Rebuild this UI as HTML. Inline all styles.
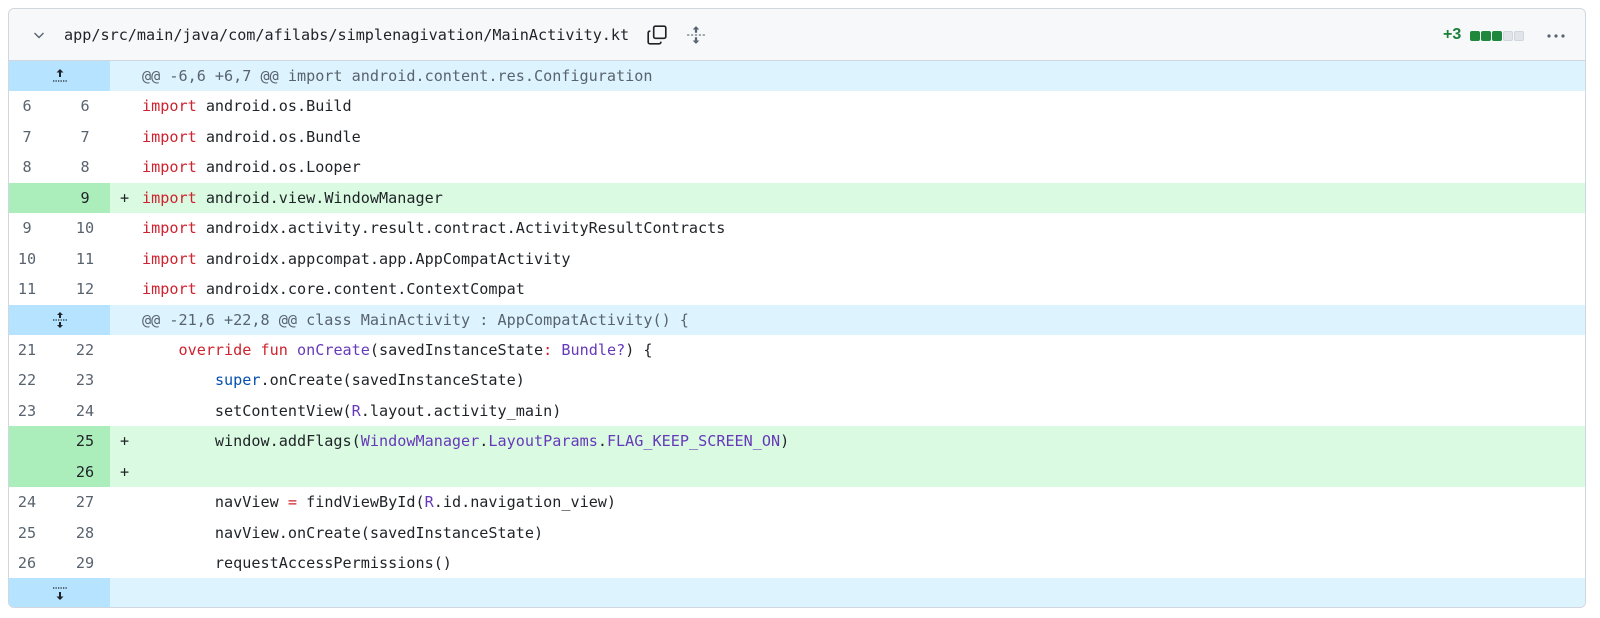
<!DOCTYPE html>
<html><head><style>
body{margin:0;background:#fff;width:1600px;height:618px;overflow:hidden}
.box{position:absolute;left:8px;top:8px;width:1576px;height:598px;border:1px solid #d0d7de;border-radius:6px;overflow:hidden;font-family:"DejaVu Sans Mono","Liberation Mono",monospace;font-size:15.15px;color:#1f2328}
.hdr{height:51px;background:#f6f8fa;border-bottom:1px solid #d0d7de;position:relative}
.row{height:30.45px;line-height:30.45px;position:relative;white-space:pre}
.n1,.n2{position:absolute;top:0;text-align:center;color:#59636e}
.n1{left:0;width:36px}.n2{left:52px;width:48px}
.code{position:absolute;left:133px;top:0}
.pl{position:absolute;left:111px;top:0}
.hk{background:#ddf4ff;color:#59636e}
.hk .g{position:absolute;left:0;top:0;width:101px;height:100%;background:#b6e3ff}
.ad{background:#dafbe1}
.ad .g{position:absolute;left:0;top:0;width:101px;height:100%;background:#aceebb}
.k{color:#cf222e}.b{color:#0550ae}.p{color:#6639ba}
</style></head><body>
<div class="box">
<div class="hdr">
<svg style="position:absolute;left:22px;top:18px" width="16" height="16" viewBox="0 0 16 16"><path d="M3.5 6l4.5 4.5L12.5 6" fill="none" stroke="#59636e" stroke-width="1.4"/></svg>
<div style="position:absolute;left:55px;top:17px">app/src/main/java/com/afilabs/simplenagivation/MainActivity.kt</div>
<svg style="position:absolute;left:637px;top:15px" width="22" height="22" viewBox="0 0 20 20" fill="none" stroke="#1f2328" stroke-width="1.5"><rect x="7" y="2" width="11" height="11" rx="1.5"/><path d="M4 6.5H3.5a1.5 1.5 0 0 0-1.5 1.5v8.5a1.5 1.5 0 0 0 1.5 1.5H12a1.5 1.5 0 0 0 1.5-1.5V16"/></svg>
<svg style="position:absolute;left:677px;top:16px" width="20" height="20" viewBox="0 0 18 18" fill="#59636e"><path d="M9 1l3 3H10v3H8V4H6z"/><path d="M9 17l3-3H10v-3H8v3H6z"/><rect x="1" y="8.5" width="2" height="1"/><rect x="4.5" y="8.5" width="2" height="1"/><rect x="8" y="8.5" width="2" height="1"/><rect x="11.5" y="8.5" width="2" height="1"/><rect x="15" y="8.5" width="2" height="1"/></svg>
<div style="position:absolute;left:1434px;top:17px;font-family:'Liberation Sans',sans-serif;font-weight:bold;font-size:16px;color:#1a7f37">+3</div>
<div style="position:absolute;left:1461px;top:22px;display:flex;gap:1px">
<span style="width:10px;height:10px;border-radius:2px;background:#1f883d"></span><span style="width:10px;height:10px;border-radius:2px;background:#1f883d"></span><span style="width:10px;height:10px;border-radius:2px;background:#1f883d"></span><span style="width:10px;height:10px;border-radius:2px;background:#e1e4e8;border:1px solid #d0d7de;box-sizing:border-box"></span><span style="width:10px;height:10px;border-radius:2px;background:#e1e4e8;border:1px solid #d0d7de;box-sizing:border-box"></span></div>
<svg style="position:absolute;left:1537px;top:19px" width="20" height="16" viewBox="0 0 20 16" fill="#59636e"><circle cx="3" cy="8" r="1.6"/><circle cx="10" cy="8" r="1.6"/><circle cx="17" cy="8" r="1.6"/></svg>
</div>
<div class="row hk"><div class="g"><svg style="position:absolute;left:42px;top:7px" width="18" height="16" viewBox="0 0 18 16" fill="#1f2328"><path d="M9 1l3.5 3.5H10V9H8V4.5H5.5z"/><path d="M2 13h1.3M4.5 13h1.3M7 13h1.3M9.5 13h1.3M12 13h1.3M14.5 13h1.3" stroke="#1f2328" stroke-width="1.2"/></svg></div><span class="code">@@ -6,6 +6,7 @@ import android.content.res.Configuration</span></div>
<div class="row"><span class="n1">6</span><span class="n2">6</span><span class="code"><span class="k">import</span> android.os.Build</span></div>
<div class="row"><span class="n1">7</span><span class="n2">7</span><span class="code"><span class="k">import</span> android.os.Bundle</span></div>
<div class="row"><span class="n1">8</span><span class="n2">8</span><span class="code"><span class="k">import</span> android.os.Looper</span></div>
<div class="row ad"><div class="g"></div><span class="n2" style="color:#1f2328">9</span><span class="pl">+</span><span class="code"><span class="k">import</span> android.view.WindowManager</span></div>
<div class="row"><span class="n1">9</span><span class="n2">10</span><span class="code"><span class="k">import</span> androidx.activity.result.contract.ActivityResultContracts</span></div>
<div class="row"><span class="n1">10</span><span class="n2">11</span><span class="code"><span class="k">import</span> androidx.appcompat.app.AppCompatActivity</span></div>
<div class="row"><span class="n1">11</span><span class="n2">12</span><span class="code"><span class="k">import</span> androidx.core.content.ContextCompat</span></div>
<div class="row hk"><div class="g"><svg style="position:absolute;left:42px;top:6px" width="18" height="18" viewBox="0 0 18 18" fill="#1f2328"><path d="M9 1l3 3H10v3H8V4H6z"/><path d="M9 17l3-3H10v-3H8v3H6z"/><path d="M2 9h1.3M4.5 9h1.3M7 9h1.3M9.5 9h1.3M12 9h1.3M14.5 9h1.3" stroke="#1f2328" stroke-width="1.2"/></svg></div><span class="code">@@ -21,6 +22,8 @@ class MainActivity : AppCompatActivity() {</span></div>
<div class="row"><span class="n1">21</span><span class="n2">22</span><span class="code">    <span class="k">override fun</span> <span class="p">onCreate</span>(savedInstanceState<span class="k">:</span> <span class="p">Bundle?</span>) {</span></div>
<div class="row"><span class="n1">22</span><span class="n2">23</span><span class="code">        <span class="b">super</span>.onCreate(savedInstanceState)</span></div>
<div class="row"><span class="n1">23</span><span class="n2">24</span><span class="code">        setContentView(<span class="p">R</span>.layout.activity_main)</span></div>
<div class="row ad"><div class="g"></div><span class="n2" style="color:#1f2328">25</span><span class="pl">+</span><span class="code">        window.addFlags(<span class="p">WindowManager</span>.<span class="p">LayoutParams</span>.<span class="p">FLAG_KEEP_SCREEN_ON</span>)</span></div>
<div class="row ad"><div class="g"></div><span class="n2" style="color:#1f2328">26</span><span class="pl">+</span></div>
<div class="row"><span class="n1">24</span><span class="n2">27</span><span class="code">        navView <span class="k">=</span> findViewById(<span class="p">R</span>.id.navigation_view)</span></div>
<div class="row"><span class="n1">25</span><span class="n2">28</span><span class="code">        navView.onCreate(savedInstanceState)</span></div>
<div class="row"><span class="n1">26</span><span class="n2">29</span><span class="code">        requestAccessPermissions()</span></div>
<div class="row hk"><div class="g"><svg style="position:absolute;left:42px;top:7px" width="18" height="16" viewBox="0 0 18 16" fill="#1f2328"><path d="M9 15l3.5-3.5H10V7H8v4.5H5.5z"/><path d="M2 3h1.3M4.5 3h1.3M7 3h1.3M9.5 3h1.3M12 3h1.3M14.5 3h1.3" stroke="#1f2328" stroke-width="1.2"/></svg></div></div>
</div>
</body></html>
